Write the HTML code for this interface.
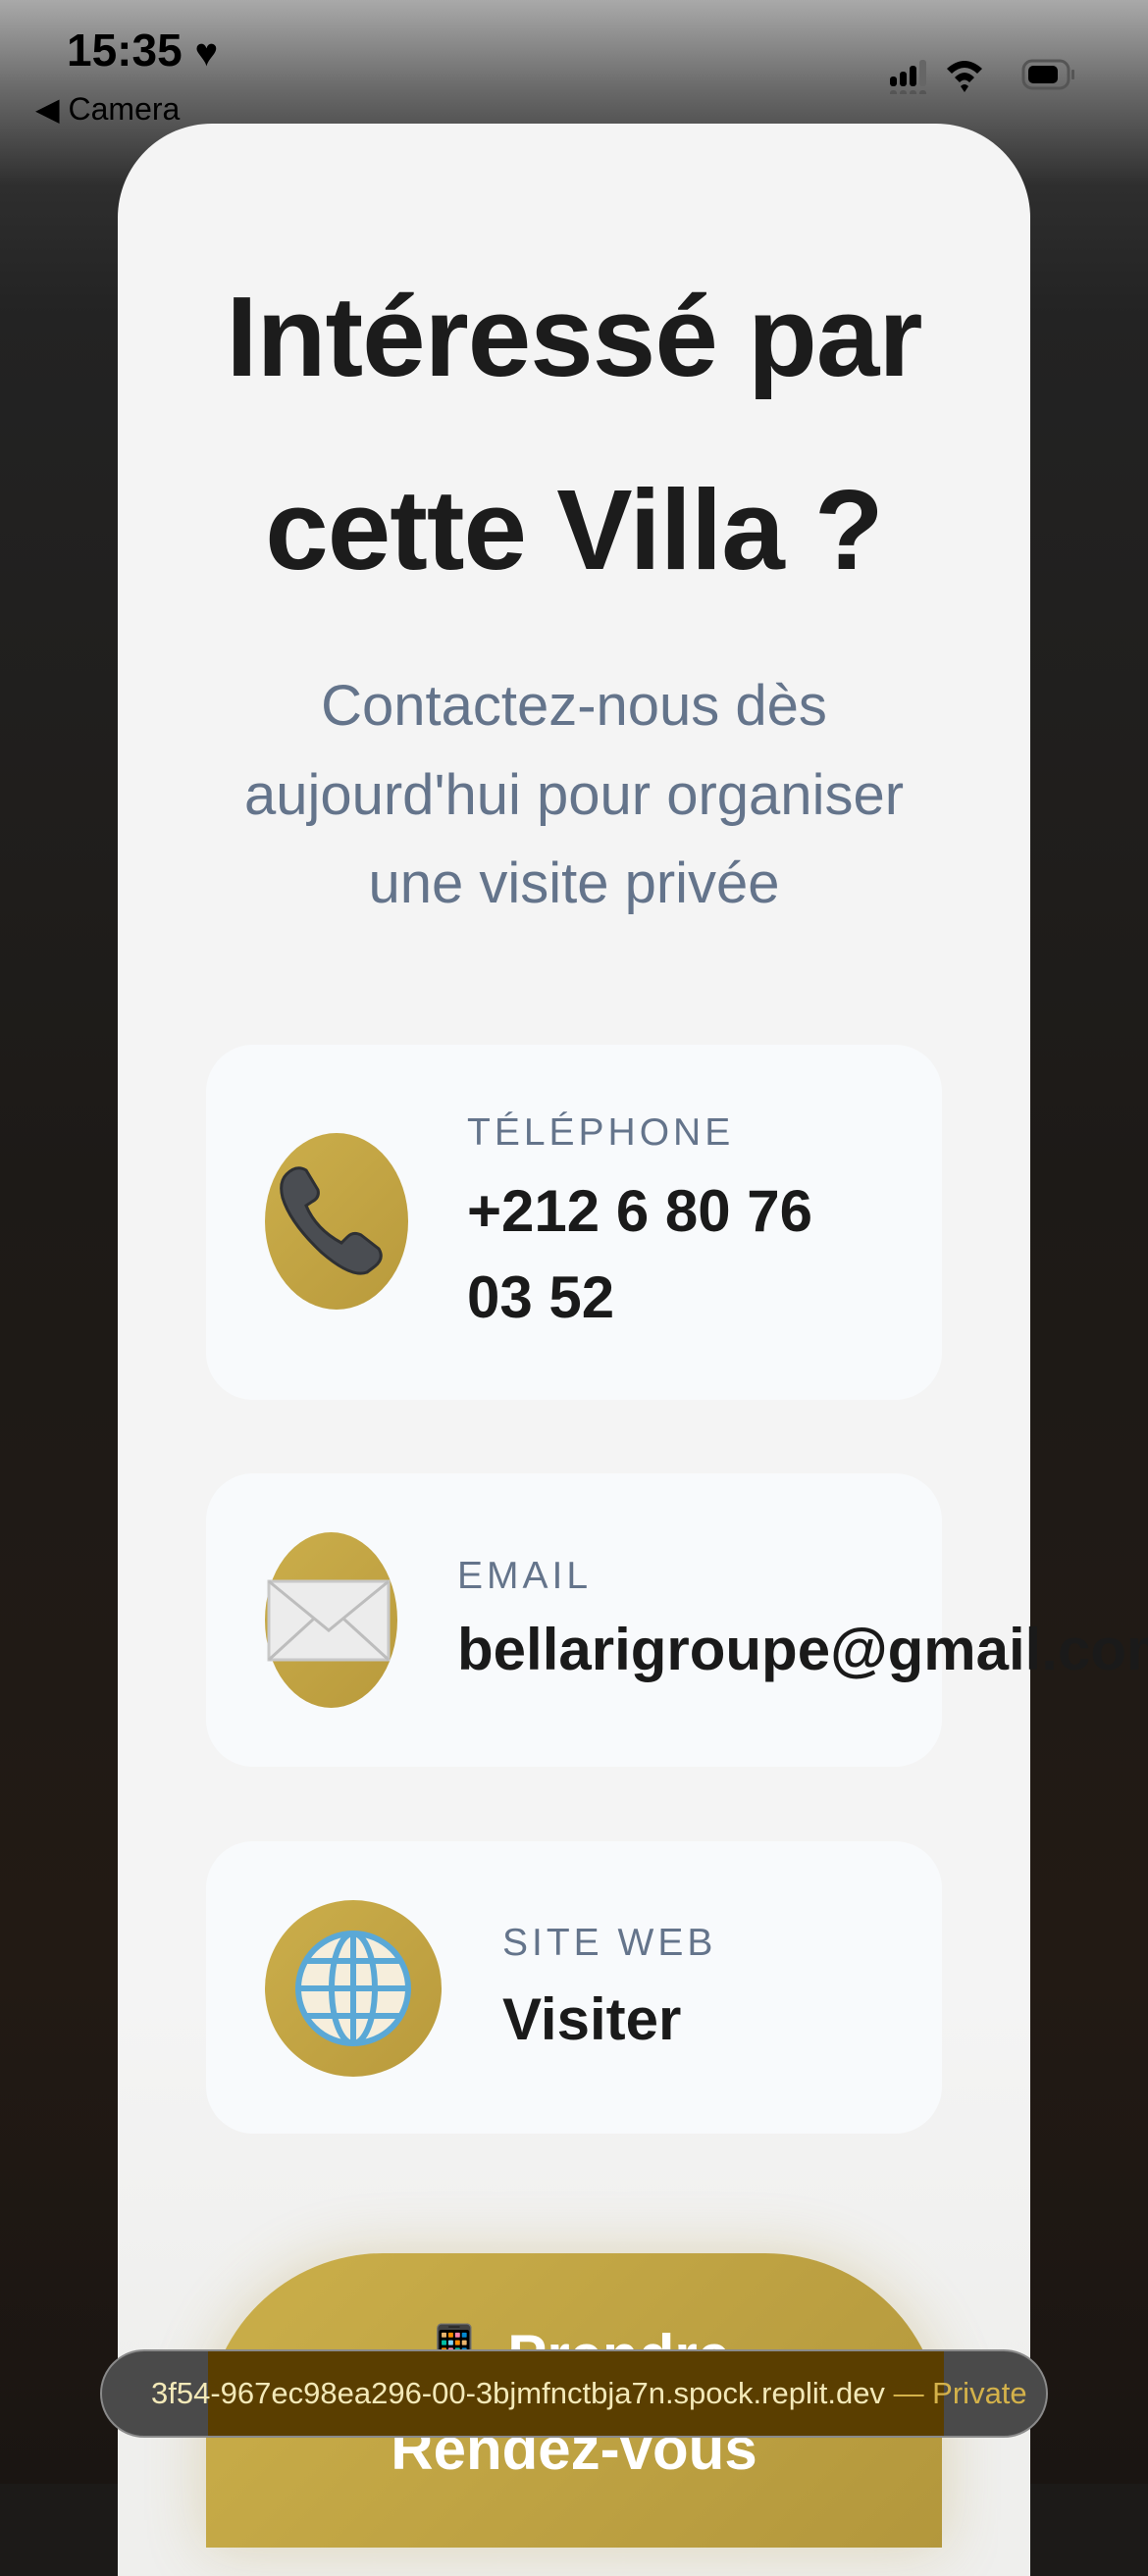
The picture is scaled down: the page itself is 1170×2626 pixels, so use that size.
<!DOCTYPE html>
<html><head><meta charset="utf-8"><style>
*{margin:0;padding:0;box-sizing:border-box}
body{width:1170px;height:2532px;overflow:hidden;position:relative;font-family:"Liberation Sans",sans-serif;background:#1c1a18}
.bg{position:absolute;inset:0;background:linear-gradient(180deg,#a9a9a9 0,#6a6a6a 90px,#2e2e2e 190px,#232323 320px,#1d1a17 1200px,#221a14 2000px,#1a1512 2532px)}
.abs{position:absolute}
.card{left:120px;top:126px;width:930px;height:2500px;background:linear-gradient(180deg,#f4f4f4 0,#f4f4f4 1900px,#efefed 2300px);border-radius:96px 96px 0 0}
.t{left:120px;width:930px;text-align:center;color:#1c1c1c;font-weight:bold;font-size:116px;letter-spacing:-1px;white-space:nowrap}
.s{left:120px;width:930px;text-align:center;color:#64748b;font-size:58px}
.ic{left:210px;width:750px;background:#f8fafc;border-radius:48px}
.circ{background:linear-gradient(135deg,#cbae4b,#b99a3c);border-radius:50%}
.lab{color:#64748b;font-size:39px;letter-spacing:4px}
.val{color:#1a1a1a;font-size:60px;font-weight:bold;white-space:nowrap}
</style></head><body>
<div class="bg"></div>
<div class="abs" style="left:68px;top:24px;font-size:46px;font-weight:bold;color:#000">15:35 <span style="font-size:40px">♥</span></div>
<div class="abs" style="left:36px;top:92px;font-size:32px;color:#000">◀ Camera</div>
<svg class="abs" style="left:905px;top:56px" width="210" height="40" viewBox="0 0 210 40">
<g fill="#000"><rect x="2" y="22" width="7" height="10" rx="3"/><rect x="12" y="17" width="7" height="15" rx="3"/><rect x="22" y="11" width="7" height="21" rx="3"/></g><rect x="32" y="5" width="7" height="27" rx="3" fill="#666"/>
<g fill="#555"><rect x="2" y="36" width="7" height="8" rx="3"/><rect x="12" y="36" width="7" height="8" rx="3"/><rect x="22" y="36" width="7" height="8" rx="3"/><rect x="32" y="36" width="7" height="8" rx="3"/></g>
<path d="M60 14 Q78 -2 96 14 L91 19 Q78 7 65 19Z M68 23 Q78 13 88 23 L83 28 Q78 23 73 28Z M78 38 L74 32 Q78 28 82 32Z" fill="#000"/>
<rect x="138" y="6" width="46" height="28" rx="9" fill="none" stroke="#555" stroke-width="3"/><rect x="143" y="11" width="30" height="18" rx="5" fill="#000"/><rect x="187" y="15" width="3" height="10" rx="1" fill="#555"/>
</svg>
<div class="abs card"></div>
<div class="abs t" style="top:276px">Intéressé par</div>
<div class="abs t" style="top:473px">cette Villa ?</div>
<div class="abs s" style="top:686px">Contactez-nous dès</div>
<div class="abs s" style="top:777px">aujourd'hui pour organiser</div>
<div class="abs s" style="top:867px">une visite privée</div>

<div class="abs ic" style="top:1065px;height:362px"></div>
<div class="abs circ" style="left:270px;top:1155px;width:146px;height:180px"></div>
<svg class="abs" style="left:278px;top:1185px" width="120" height="120" viewBox="0 0 120 120"><path d="M14 12 Q24 2 34 8 L46 28 Q48 36 40 40 L34 44 Q44 68 70 82 L76 76 Q82 70 90 74 L108 88 Q114 98 104 106 L96 112 Q80 118 50 92 Q18 62 10 36 Q6 20 14 12Z" fill="#4a4d52" stroke="#2e3034" stroke-width="3"/></svg>
<div class="abs lab" style="left:476px;top:1133px">TÉLÉPHONE</div>
<div class="abs val" style="left:476px;top:1200px">+212 6 80 76</div>
<div class="abs val" style="left:476px;top:1288px">03 52</div>

<div class="abs ic" style="top:1502px;height:299px"></div>
<div class="abs circ" style="left:270px;top:1562px;width:135px;height:179px"></div>
<svg class="abs" style="left:272px;top:1610px" width="126" height="84" viewBox="0 0 126 84"><rect x="2" y="2" width="122" height="80" fill="#ececec" stroke="#c8c8c8" stroke-width="3"/><path d="M2 2 L63 52 L124 2 M2 82 L48 40 M124 82 L78 40" fill="none" stroke="#bdbdbd" stroke-width="3"/></svg>
<div class="abs lab" style="left:466px;top:1585px">EMAIL</div>
<div class="abs val" style="left:466px;top:1647px">bellarigroupe@gmail.com</div>

<div class="abs ic" style="top:1877px;height:298px"></div>
<div class="abs circ" style="left:270px;top:1937px;width:180px;height:180px"></div>
<svg class="abs" style="left:300px;top:1967px" width="120" height="120" viewBox="0 0 120 120"><circle cx="60" cy="60" r="56" fill="#f6eedc" stroke="#5aa8d6" stroke-width="6"/><g fill="none" stroke="#5aa8d6" stroke-width="6"><ellipse cx="60" cy="60" rx="22" ry="56"/><path d="M60 4V116M4 60H116M12 32H108M12 88H108"/></g></svg>
<div class="abs lab" style="left:512px;top:1959px">SITE WEB</div>
<div class="abs val" style="left:512px;top:2024px">Visiter</div>

<div class="abs" style="left:210px;top:2297px;width:750px;height:300px;background:linear-gradient(135deg,#cbaf4a,#b3973c);border-radius:180px 180px 0 0;box-shadow:0 0 60px rgba(180,150,60,.3)"></div>
<div class="abs" style="left:210px;top:2366px;width:750px;text-align:center;color:#fff;font-size:60px;font-weight:bold">📱 Prendre</div>
<div class="abs" style="left:210px;top:2462px;width:750px;text-align:center;color:#fff;font-size:60px;font-weight:bold">Rendez-vous</div>

<div class="abs" style="left:102px;top:2395px;width:966px;height:90px;border-radius:45px;background:linear-gradient(90deg,#4a4a4a 0,#4a4a4a 108px,#5a3e00 108px,#5a3e00 858px,#4a4a4a 858px);border:2px solid #8a8a8a;overflow:hidden;white-space:nowrap;font-size:31px;line-height:86px;padding-left:50px;color:#f3e9b8">3f54-967ec98ea296-00-3bjmfnctbja7n.spock.replit.dev <span style="color:#d4b24a">— Private</span></div>
</body></html>
